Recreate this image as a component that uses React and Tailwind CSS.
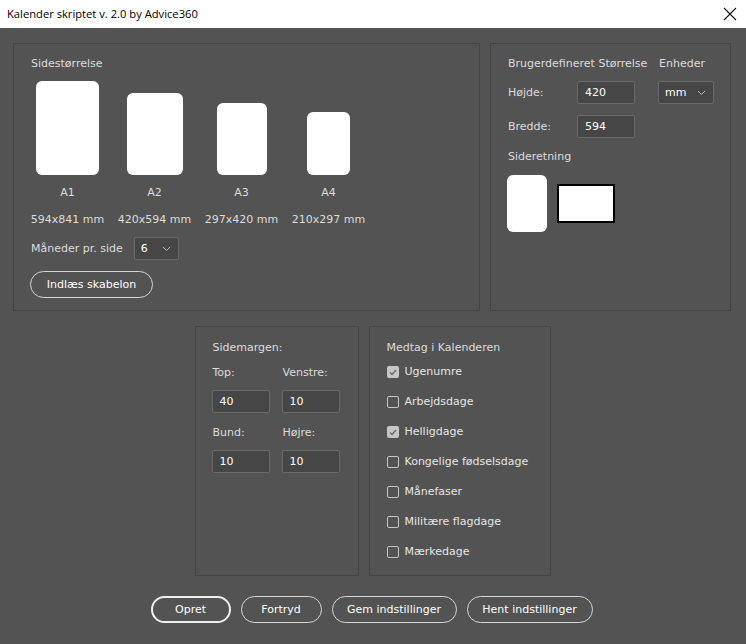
import React, { useState } from "react";

const font = { fontFamily: '"DejaVu Sans", Verdana, sans-serif' };
const titleFont = { fontFamily: '"Open Sans", "Liberation Sans", sans-serif' };

const pages = [
  { name: "A1", size: "594x841 mm", cls: "w-[63px] h-[94px]" },
  { name: "A2", size: "420x594 mm", cls: "w-[56px] h-[82px]" },
  { name: "A3", size: "297x420 mm", cls: "w-[50px] h-[72px]" },
  { name: "A4", size: "210x297 mm", cls: "w-[43px] h-[63px]" },
];

const options = [
  { label: "Ugenumre", checked: true },
  { label: "Arbejdsdage", checked: false },
  { label: "Helligdage", checked: true },
  { label: "Kongelige fødselsdage", checked: false },
  { label: "Månefaser", checked: false },
  { label: "Militære flagdage", checked: false },
  { label: "Mærkedage", checked: false },
];

const Chevron = () => (
  <svg width="9" height="6" viewBox="0 0 9 6" className="shrink-0">
    <polyline points="1,1 4.5,4.5 8,1" fill="none" stroke="#b8b8b8" strokeWidth="1" />
  </svg>
);

const TextBox = ({ value }) => (
  <div className="w-[58px] h-[23px] bg-[#464646] border border-[#6a6a6a] rounded-[2px] px-[7px] flex items-center text-white">
    {value}
  </div>
);

const Dropdown = ({ value, width }) => (
  <div
    className={`${width} h-[23px] bg-[#464646] border border-[#6a6a6a] rounded-[2px] pl-[6px] pr-[7px] flex items-center justify-between text-white`}
  >
    <span>{value}</span>
    <Chevron />
  </div>
);

const Checkbox = ({ checked }) =>
  checked ? (
    <div className="w-[12px] h-[12px] shrink-0 rounded-[2px] bg-[#c6c6c6] flex items-center justify-center">
      <svg width="8" height="7" viewBox="0 0 8 7">
        <polyline points="1,3.5 3,5.5 7,1" fill="none" stroke="#6d6d6d" strokeWidth="1.5" />
      </svg>
    </div>
  ) : (
    <div className="w-[12px] h-[12px] shrink-0 rounded-[2px] border border-[#c6c6c6]" />
  );

const PillButton = ({ children, width, primary }) => (
  <button
    className={`${width} h-[27px] rounded-full flex items-center justify-center text-white whitespace-nowrap ${
      primary ? "border-2 border-[#f0f0f0]" : "border border-[#d6d6d6]"
    }`}
  >
    {children}
  </button>
);

export default function App() {
  const [checks] = useState(options);

  return (
    <div className="w-[746px] h-[644px] flex flex-col text-[11px] leading-[16px] text-[#dcdcdc]" style={font}>
      {/* title bar */}
      <div className="h-[28px] bg-white flex items-center justify-between pl-[7px] pr-[9px] text-black" style={titleFont}>
        <span className="text-[11.2px]">Kalender skriptet v. 2.0 by Advice360</span>
        <svg width="14" height="14" viewBox="0 0 14 14">
          <path d="M1 1 L13 13 M13 1 L1 13" stroke="#111" strokeWidth="1.1" />
        </svg>
      </div>

      <div className="flex-1 bg-[#535353] flex flex-col pt-[15px]">
        {/* top row */}
        <div className="flex gap-[10px] pl-[13px]">
          {/* Sidestørrelse */}
          <div className="w-[467px] h-[268px] border border-[#454545] pt-[12px] pl-[17px] flex flex-col">
            <div>Sidestørrelse</div>
            <div className="flex gap-[14px] mt-[9px]">
              {pages.map((p) => (
                <div key={p.name} className="w-[73px] flex flex-col items-center">
                  <div className="h-[94px] flex items-end">
                    <div className={`${p.cls} bg-white rounded-[6px]`} />
                  </div>
                  <div className="mt-[10px]">{p.name}</div>
                  <div className="mt-[11px] whitespace-nowrap">{p.size}</div>
                </div>
              ))}
            </div>
            <div className="flex items-center gap-[11px] mt-[9px]">
              <span>Måneder pr. side</span>
              <Dropdown value="6" width="w-[45px]" />
            </div>
            <div className="mt-[11px]">
              <button className="h-[27px] w-[123px] -ml-[1px] rounded-full border border-[#d6d6d6] text-white">
                Indlæs skabelon
              </button>
            </div>
          </div>

          {/* Brugerdefineret */}
          <div className="w-[241px] h-[268px] border border-[#454545] pt-[12px] pl-[17px] flex flex-col">
            <div className="flex">
              <span className="w-[151px] whitespace-nowrap">Brugerdefineret Størrelse</span>
              <span>Enheder</span>
            </div>
            <div className="flex items-center mt-[9px]">
              <span className="w-[69px]">Højde:</span>
              <TextBox value="420" />
              <div className="ml-[23px]">
                <Dropdown value="mm" width="w-[56px]" />
              </div>
            </div>
            <div className="flex items-center mt-[11px]">
              <span className="w-[69px]">Bredde:</span>
              <TextBox value="594" />
            </div>
            <div className="mt-[11px]">Sideretning</div>
            <div className="flex items-center gap-[10px] mt-[10px] -ml-[1px]">
              <div className="w-[40px] h-[57px] bg-white rounded-[6px]" />
              <div className="w-[58px] h-[39px] bg-white border-2 border-black" />
            </div>
          </div>
        </div>

        {/* bottom row */}
        <div className="flex justify-center gap-[10px] mt-[15px] pr-[1px]">
          {/* Sidemargen */}
          <div className="w-[164px] h-[250px] border border-[#454545] pt-[13px] pl-[17px] flex flex-col">
            <div>Sidemargen:</div>
            <div className="grid grid-cols-[58px_58px] gap-x-[12px] mt-[9px] -ml-[1px]">
              <span className="pl-[1px]">Top:</span>
              <span className="pl-[1px]">Venstre:</span>
              <div className="mt-[9px]">
                <TextBox value="40" />
              </div>
              <div className="mt-[9px]">
                <TextBox value="10" />
              </div>
              <span className="pl-[1px] mt-[12px]">Bund:</span>
              <span className="pl-[1px] mt-[12px]">Højre:</span>
              <div className="mt-[9px]">
                <TextBox value="10" />
              </div>
              <div className="mt-[9px]">
                <TextBox value="10" />
              </div>
            </div>
          </div>

          {/* Medtag */}
          <div className="w-[182px] h-[250px] border border-[#454545] pt-[13px] pl-[17px] flex flex-col">
            <div>Medtag i Kalenderen</div>
            <div className="flex flex-col gap-[14px] mt-[8px]">
              {checks.map((c) => (
                <div key={c.label} className="flex items-center gap-[6px] h-[16px]">
                  <Checkbox checked={c.checked} />
                  <span className="text-[#e6e6e6] whitespace-nowrap">{c.label}</span>
                </div>
              ))}
            </div>
          </div>
        </div>

        {/* buttons */}
        <div className="flex justify-center gap-[10px] mt-[20px] pr-[3px]">
          <PillButton width="w-[80px]" primary>
            Opret
          </PillButton>
          <PillButton width="w-[81px]">Fortryd</PillButton>
          <PillButton width="w-[125px]">Gem indstillinger</PillButton>
          <PillButton width="w-[126px]">Hent indstillinger</PillButton>
        </div>
      </div>
    </div>
  );
}
